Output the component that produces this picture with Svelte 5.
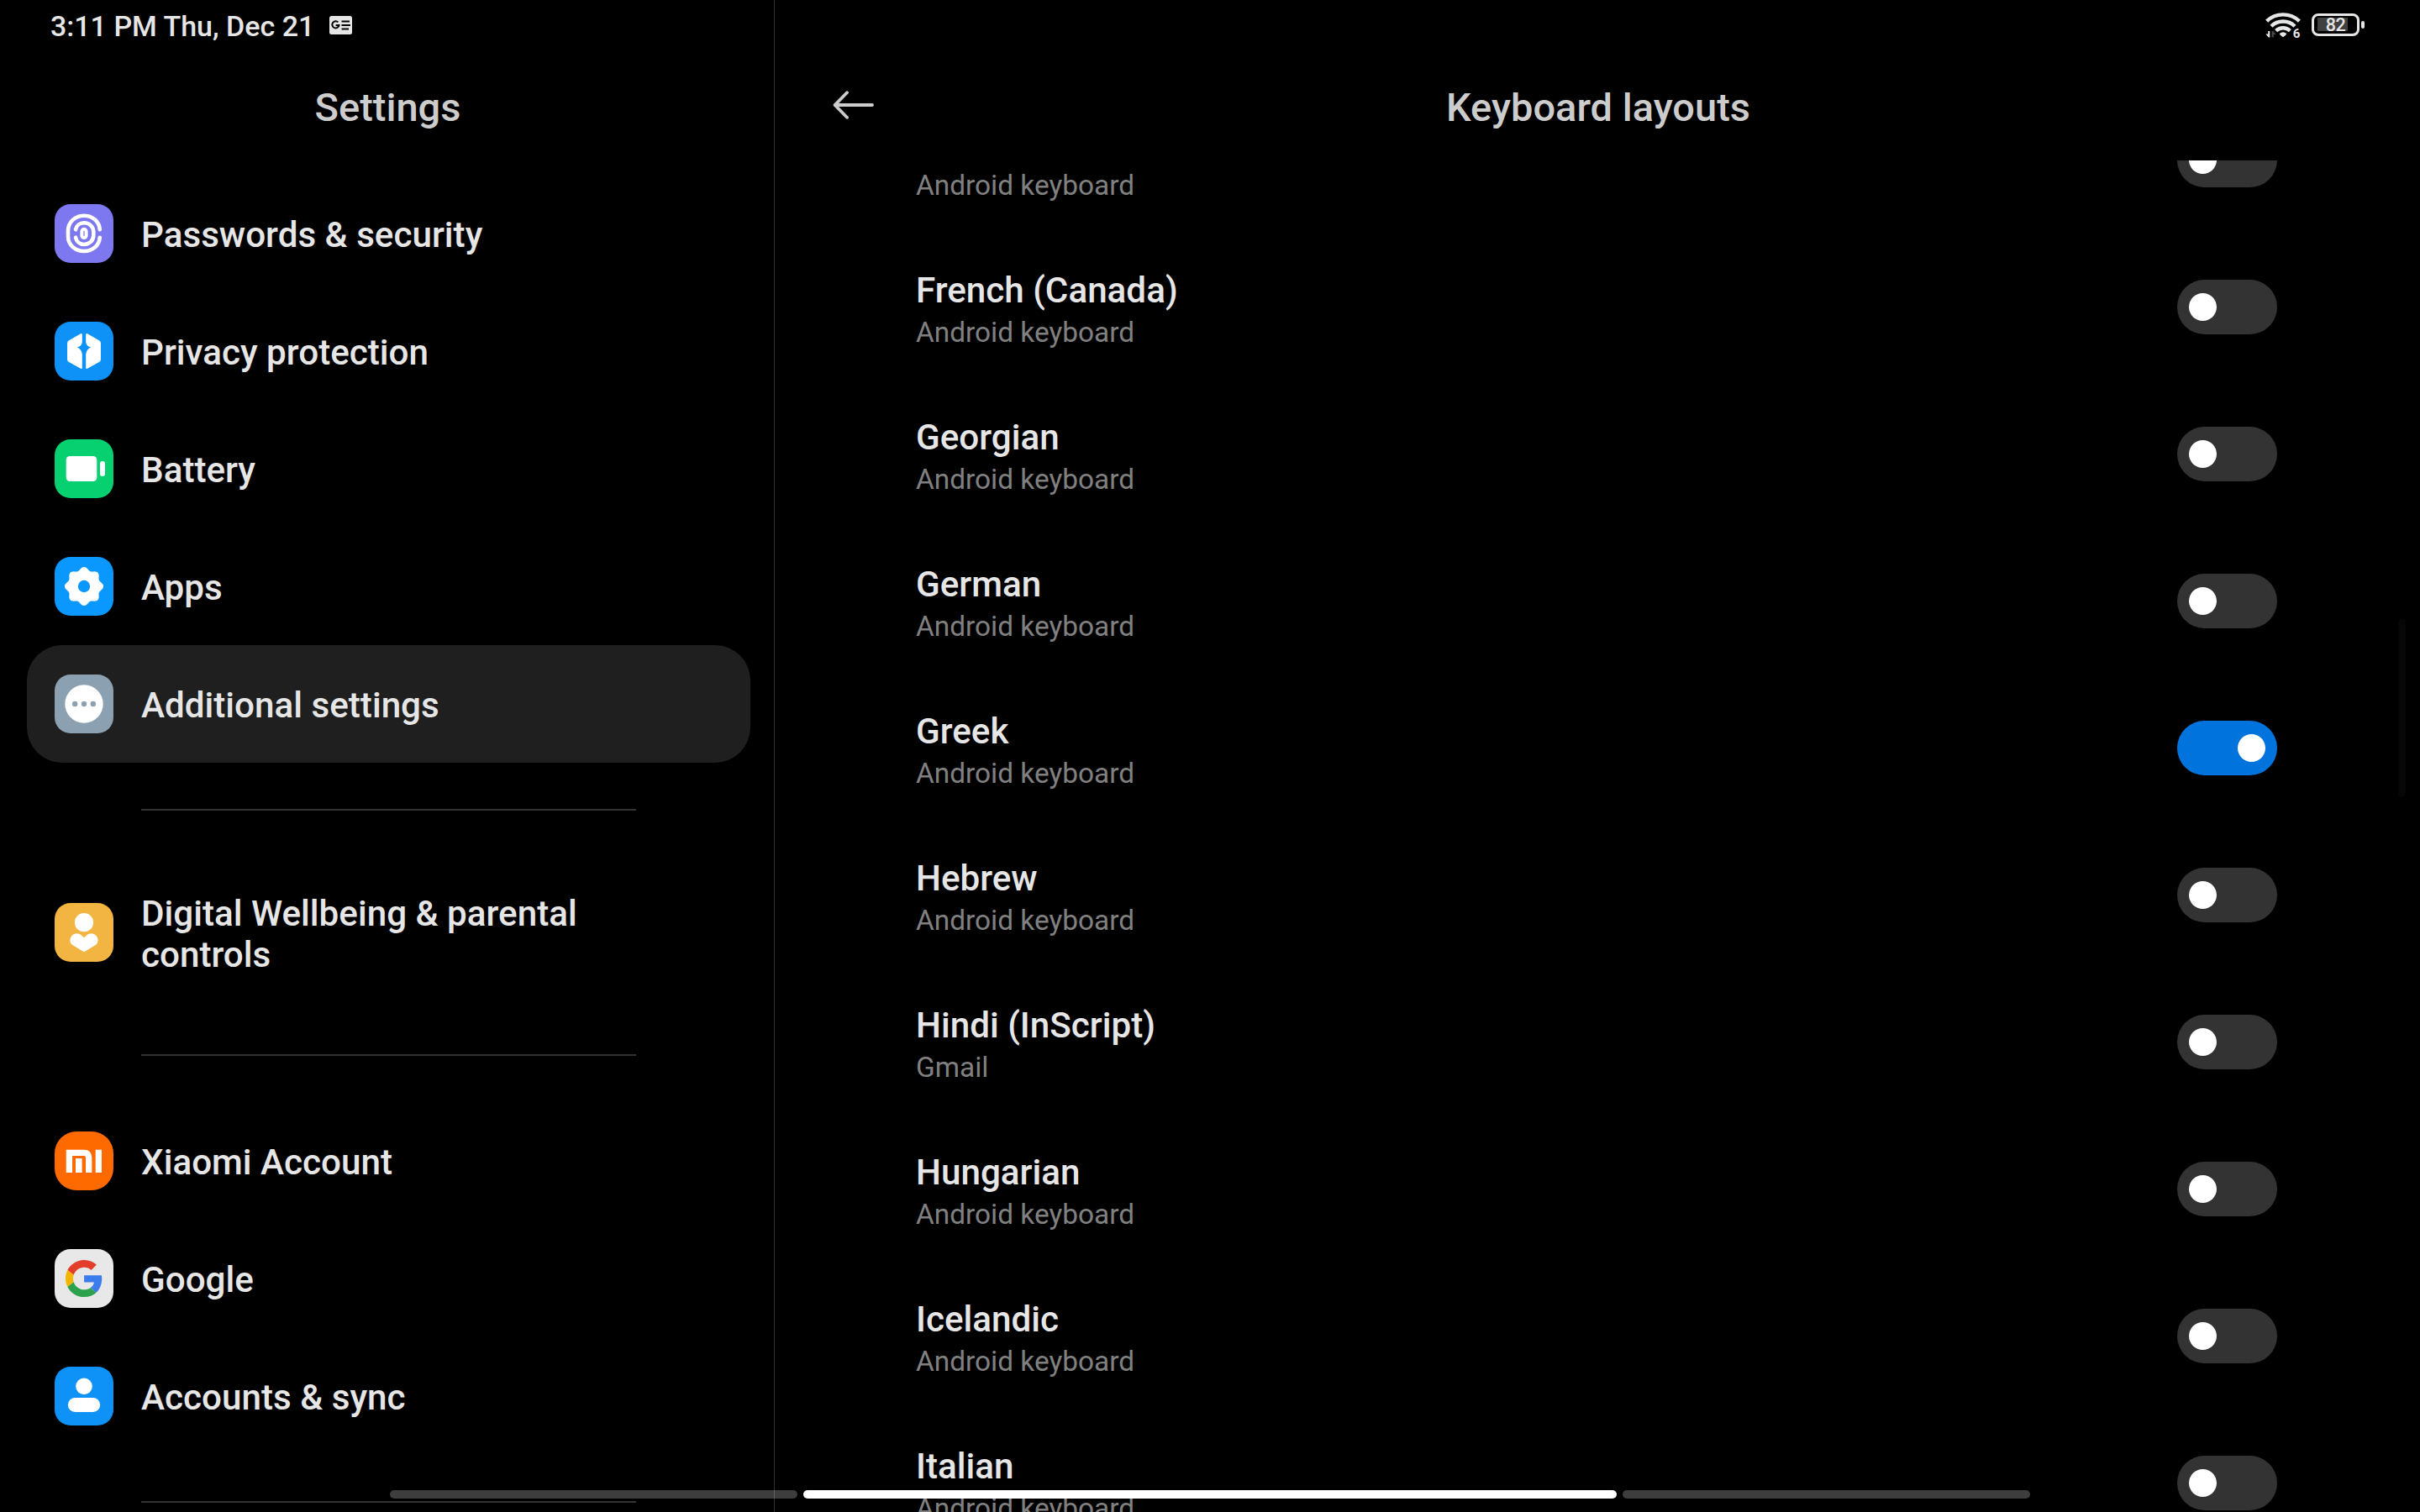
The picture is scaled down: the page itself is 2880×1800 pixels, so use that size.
<script>
  const accounts = [
    { icon: 'xiaomi', label: 'Xiaomi Account' },
    { icon: 'google', label: 'Google' },
    { icon: 'sync', label: 'Accounts & sync' },
  ];
  const general = [
    { icon: 'passwords', label: 'Passwords & security' },
    { icon: 'privacy', label: 'Privacy protection' },
    { icon: 'battery', label: 'Battery' },
    { icon: 'apps', label: 'Apps' },
    { icon: 'additional', label: 'Additional settings', selected: true },
  ];
  const groups = [
    general,
    [{ icon: 'wellbeing', label: 'Digital Wellbeing & parental controls', tall: true }],
    accounts,
  ];

  let layouts = $state([
    { name: 'French', source: 'Android keyboard', on: false },
    { name: 'French (Canada)', source: 'Android keyboard', on: false },
    { name: 'Georgian', source: 'Android keyboard', on: false },
    { name: 'German', source: 'Android keyboard', on: false },
    { name: 'Greek', source: 'Android keyboard', on: true },
    { name: 'Hebrew', source: 'Android keyboard', on: false },
    { name: 'Hindi (InScript)', source: 'Gmail', on: false },
    { name: 'Hungarian', source: 'Android keyboard', on: false },
    { name: 'Icelandic', source: 'Android keyboard', on: false },
    { name: 'Italian', source: 'Android keyboard', on: false },
  ]);

  // Eight-lobed gear outline, sampled around its centre.
  const gear =
    'M' +
    Array.from({ length: 144 }, (_, i) => {
      const a = (i / 144) * Math.PI * 2;
      const r = 21.2 + 1.9 * Math.cos(8 * a);
      return `${(35 + r * Math.cos(a)).toFixed(2)} ${(35 + r * Math.sin(a)).toFixed(2)}`;
    }).join('L') +
    'Z';
</script>

{#snippet glyph(name)}
  <svg class="icon {name}" viewBox="0 0 70 70" aria-hidden="true">
    {#if name === 'passwords'}
      <g fill="none" stroke="#fff" stroke-width="4.6" stroke-linecap="round">
        <path d="M53.8 30.3C53 20.5 45 13.7 35 13.7C24.5 13.7 16 21.5 16 31.5v7C16 48.5 24.5 56 35 56C45 56 53 49.5 53.8 39.7" />
        <path d="M25 30.3C26 25.5 30 22.3 35 22.3C41.3 22.3 46.3 27 46.3 33v4C46.3 43.5 41.3 48 35 48C30 48 26 44.7 25 39.7" />
        <rect x="32.4" y="29.8" width="5.2" height="10.2" rx="2.6" stroke-width="4" />
      </g>
    {:else if name === 'privacy'}
      <g fill="#fff">
        <path d="M31 14.3L17 22.2Q15 23.4 15 25.5V44.5Q15 46.8 17 48L31 55.8Q32.8 56.6 32.8 54.8V39Q32.5 33.5 27 30.3Q32.8 29 32.8 24V15.5Q32.8 13.5 31 14.3Z" />
        <path d="M39 14.3L53 22.2Q55 23.4 55 25.5V44.5Q55 46.8 53 48L39 55.8Q37.2 56.6 37.2 54.8V39Q37.5 33.5 43 30.3Q37.2 29 37.2 24V15.5Q37.2 13.5 39 14.3Z" />
      </g>
    {:else if name === 'battery'}
      <rect x="13.7" y="20" width="36.6" height="30" rx="4.5" fill="#fff" />
      <rect x="54" y="26" width="6" height="18" rx="3" fill="#fff" />
    {:else if name === 'apps'}
      <path d={gear} fill="#fff" />
      <circle cx="35" cy="35" r="7.2" fill="#0a98ff" />
    {:else if name === 'additional'}
      <circle cx="35" cy="35" r="22.7" fill="#fff" />
      <g fill="#8ba0b0">
        <circle cx="24.2" cy="35" r="3.2" />
        <circle cx="35" cy="35" r="3.2" />
        <circle cx="45.8" cy="35" r="3.2" />
      </g>
    {:else if name === 'wellbeing'}
      <circle cx="35" cy="23.2" r="11.1" fill="#fff" />
      <path fill="#fff" d="M35 41.3L32 38.6C28.5 35.4 23.5 35.6 20.5 38.9C17.6 42.2 17.8 46.8 20.9 49.8L33.5 57.4Q35 58.6 36.5 57.4L49.1 49.8C52.2 46.8 52.4 42.2 49.5 38.9C46.5 35.6 41.5 35.4 38 38.6Z" />
    {:else if name === 'xiaomi'}
      <path fill="none" stroke="#fff" stroke-width="7.3" d="M17.4 49V25.4H35Q40.7 25.4 40.7 31.5V49" />
      <rect x="25" y="32" width="7.6" height="17" fill="#fff" />
      <rect x="48.7" y="21.7" width="7.3" height="27.3" fill="#fff" />
    {:else if name === 'google'}
      <g transform="translate(13 12.9) scale(.92)">
        <path fill="#e33e2b" d="M24 9.5c3.54 0 6.71 1.22 9.21 3.6l6.85-6.85C35.9 2.38 30.47 0 24 0 14.62 0 6.51 5.38 2.56 13.22l7.98 6.19C12.43 13.72 17.74 9.5 24 9.5z" />
        <path fill="#3b7ded" d="M46.98 24.55c0-1.57-.15-3.09-.38-4.55H24v9.02h12.94c-.58 2.96-2.26 5.48-4.78 7.18l7.73 6c4.51-4.18 7.09-10.36 7.09-17.65z" />
        <path fill="#f2b600" d="M10.53 28.59c-.48-1.45-.76-2.99-.76-4.59s.27-3.14.76-4.59l-7.98-6.19C.92 16.46 0 20.12 0 24c0 3.88.92 7.54 2.56 10.78l7.97-6.19z" />
        <path fill="#2ca24c" d="M24 48c6.48 0 11.93-2.13 15.89-5.81l-7.73-6c-2.15 1.45-4.92 2.3-8.16 2.3-6.26 0-11.57-4.22-13.47-9.91l-7.98 6.19C6.51 42.62 14.62 48 24 48z" />
      </g>
    {:else}
      <circle cx="35" cy="23.4" r="9.8" fill="#fff" />
      <rect x="15.8" y="37" width="38.4" height="17" rx="8.5" fill="#fff" />
    {/if}
  </svg>
{/snippet}

<div class="screen">
  <aside class="sidebar">
    <div class="status">
      <span>3:11 PM Thu, Dec 21</span>
      <svg class="news" viewBox="0 0 27 22" aria-hidden="true">
        <rect width="27" height="22" rx="2.5" fill="#e6e6e6" />
        <path d="M10.4 7.4A4.1 4.1 0 1 0 11.5 11H7.6" fill="none" stroke="#000" stroke-width="2" />
        <path d="M14.5 6.6H24M14.5 11H25M14.5 15.4H23" stroke="#000" stroke-width="2" />
      </svg>
    </div>
    <h1>Settings</h1>
    <nav>
      {#each groups as group}
        <div class="group">
          {#each group as item}
            <div class="item" class:selected={item.selected} class:tall={item.tall}>
              {@render glyph(item.icon)}
              <span class="label">{item.label}</span>
            </div>
          {/each}
        </div>
        <div class="rule"></div>
      {/each}
    </nav>
  </aside>

  <main>
    <div class="status right">
      <svg class="wifi" viewBox="0 0 42 34" aria-hidden="true">
        <g fill="none" stroke="#e6e6e6" stroke-width="4.4">
          <path d="M1.6 12.2A28 28 0 0 1 40.4 12.2" />
          <path d="M7 18.2A20 20 0 0 1 35 18.2" />
          <path d="M12.6 23.6A12.4 12.4 0 0 1 29.4 23.6" />
        </g>
        <path d="M16.8 27Q21 23.6 25.2 27Q25.2 28.5 21 31.2Q16.8 28.5 16.8 27Z" fill="#e6e6e6" />
        <path d="M5.3 24V31.5H3.8L.4 27.6H3.2V24Z" fill="#e6e6e6" />
        <path d="M7.6 31.5V24H9.2L12.6 28H9.8V31.5Z" fill="#4a4a4a" />
        <text x="32.8" y="32">6</text>
      </svg>
      <div class="cell">
        <div class="charge"></div>
        <span>82</span>
      </div>
      <div class="nub"></div>
    </div>
    <header>
      <svg class="back" viewBox="0 0 50 34" aria-hidden="true">
        <path d="M17 2.2L2.6 17L17 31.8M2.6 17H47" fill="none" stroke="#ccc" stroke-width="3.8" stroke-linecap="round" stroke-linejoin="round" />
      </svg>
      <h1>Keyboard layouts</h1>
    </header>
    <section class="list">
      {#each layouts as layout}
        <div class="row">
          <div class="text">
            <div class="name">{layout.name}</div>
            <div class="source">{layout.source}</div>
          </div>
          <button class="toggle" class:on={layout.on} aria-label={layout.name} onclick={() => (layout.on = !layout.on)}>
            <span class="knob"></span>
          </button>
        </div>
      {/each}
    </section>
    <div class="scrollbar"></div>
  </main>

  <div class="gesture">
    <div class="dim"></div>
    <div class="home"></div>
    <div class="dim"></div>
  </div>
</div>

<style>
  :global(body) {
    background: #000;
  }
  .screen {
    position: relative;
    display: grid;
    grid-template-columns: 922px 1fr;
    width: 2880px;
    height: 1800px;
    overflow: hidden;
    background: #000;
    color: #e6e6e6;
    font-family: Roboto, sans-serif;
  }
  .sidebar {
    height: 1800px;
    overflow: hidden;
    box-sizing: border-box;
    border-right: 1px solid #303030;
  }
  .status {
    display: flex;
    align-items: center;
    height: 62px;
    padding-left: 60px;
    font-size: 34px;
    font-weight: 500;
    white-space: nowrap;
  }
  .news {
    width: 27px;
    height: 22px;
    margin: 0 0 2px 18px;
  }
  h1 {
    margin: 0;
    height: 130px;
    line-height: 131px;
    padding-left: 2px;
    text-align: center;
    font-size: 47px;
    font-weight: 500;
    color: #ccc;
  }
  .sidebar nav {
    padding-top: 16px;
  }
  .item {
    display: flex;
    align-items: center;
    height: 140px;
    width: 861px;
    box-sizing: border-box;
    margin-left: 32px;
    padding-left: 33px;
    border-radius: 42px;
  }
  .item.tall {
    height: 180px;
  }
  .item.selected {
    background: #1f1f1f;
  }
  .rule {
    width: 589px;
    height: 2px;
    margin: 55px 0 55px 168px;
    background: #333;
  }
  .icon {
    width: 70px;
    height: 70px;
    flex: none;
    border-radius: 19px;
  }
  .passwords { background: #7d78f0; }
  .privacy { background: #0e92f7; }
  .battery { background: #06d06f; }
  .apps { background: #0a98ff; }
  .additional { background: #8ba0b0; }
  .wellbeing { background: #f3b541; }
  .xiaomi { background: #ff6a00; border-radius: 26px; }
  .google { background: #e8e8e8; }
  .sync { background: #0e92f7; }
  .label {
    width: 590px;
    margin-left: 33px;
    padding-top: 3px;
    font-size: 42.2px;
    line-height: 49px;
    font-weight: 500;
  }
  main {
    position: relative;
    display: flex;
    flex-direction: column;
    height: 1800px;
    min-width: 0;
  }
  .status.right {
    justify-content: flex-end;
    padding: 0 66px 0 0;
    flex: none;
  }
  .wifi {
    width: 42px;
    height: 34px;
    margin: 0 13px 2px 0;
    overflow: visible;
  }
  .wifi text {
    font: 700 15px Roboto, sans-serif;
    fill: #e6e6e6;
  }
  .cell {
    position: relative;
    width: 57px;
    height: 27px;
    box-sizing: border-box;
    border: 3px solid #e6e6e6;
    border-radius: 8px;
    margin-bottom: 3px;
    padding: 2px 4px;
  }
  .charge {
    width: 36px;
    height: 16px;
    background: #404040;
    border-radius: 1px;
  }
  .cell span {
    position: absolute;
    inset: 0;
    line-height: 22px;
    text-align: center;
    font-size: 21.5px;
    letter-spacing: -0.5px;
  }
  .nub {
    width: 4px;
    height: 9px;
    margin: 0 0 3px 2px;
    border-radius: 2px;
    background: #e6e6e6;
  }
  header {
    display: grid;
    grid-template-columns: 1fr;
    align-items: center;
    height: 129px;
    flex: none;
  }
  header > * {
    grid-area: 1 / 1;
  }
  .back {
    width: 50px;
    height: 34px;
    margin-left: 69px;
    margin-bottom: 4px;
  }
  .list {
    flex: 1;
    display: flex;
    flex-direction: column;
    justify-content: flex-start;
    overflow: hidden;
  }
  .row {
    display: flex;
    justify-content: space-between;
    align-items: center;
    flex: none;
    height: 175px;
    padding: 0 170px 0 168px;
  }
  .row:first-child {
    margin-top: -88px;
  }
  .text {
    padding-top: 5px;
  }
  .name {
    font-size: 42.2px;
    line-height: 49px;
    font-weight: 500;
  }
  .source {
    margin-top: 6px;
    font-size: 33.4px;
    line-height: 40px;
    color: #808080;
  }
  .toggle {
    display: flex;
    align-items: center;
    width: 119px;
    height: 65px;
    padding: 0 14px;
    border: 0;
    border-radius: 33px;
    background: #333;
  }
  .toggle.on {
    justify-content: flex-end;
    background: #0073dd;
  }
  .knob {
    width: 33px;
    height: 33px;
    border-radius: 50%;
    background: #fff;
  }
  .scrollbar {
    position: absolute;
    left: 1932px;
    top: 737px;
    width: 9px;
    height: 212px;
    border-radius: 5px;
    background: #060606;
  }
  .gesture {
    position: absolute;
    left: 464px;
    top: 1774px;
    display: flex;
    gap: 7px;
  }
  .dim,
  .home {
    height: 10px;
    border-radius: 5px;
  }
  .dim {
    width: 485px;
    background: rgba(255, 255, 255, 0.24);
  }
  .home {
    width: 968px;
    background: #fff;
  }
</style>
